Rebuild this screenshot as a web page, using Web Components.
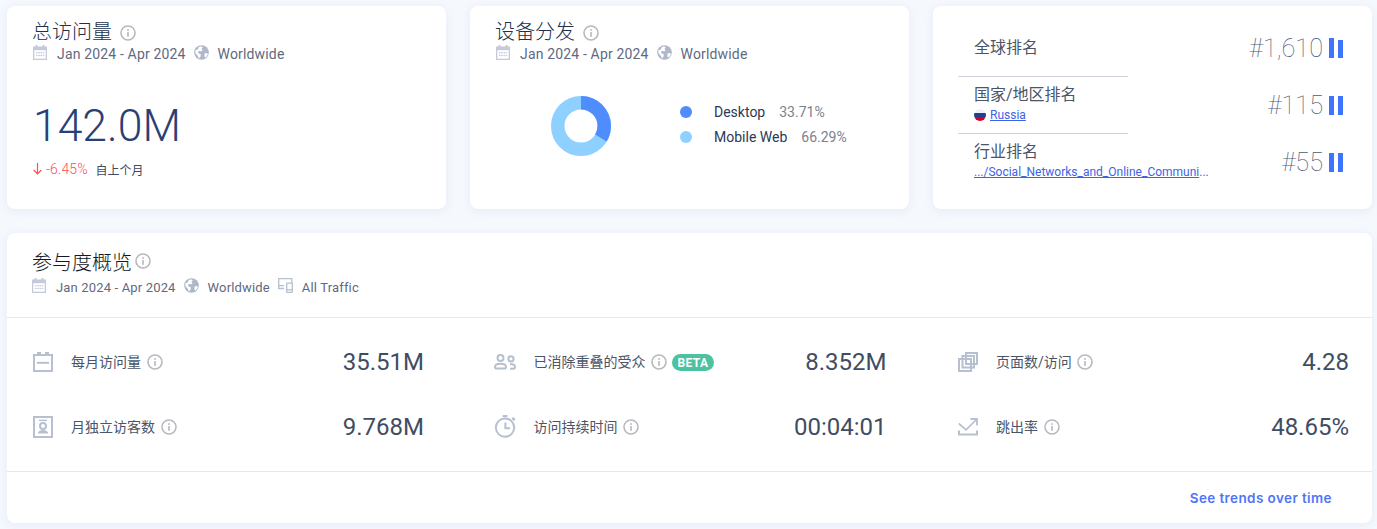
<!DOCTYPE html>
<html lang="zh"><head><meta charset="utf-8"><title>Overview</title>
<style>
html,body{margin:0;padding:0;background:#f5f8fd;}
body{font-family:Roboto,"Noto Sans CJK SC",sans-serif;color:#3a4a63;width:1377px;height:529px;overflow:hidden;}
</style></head><body>
<x-page>
  <x-card>
    <x-head title-text="总访问量"><x-meta-item icon="cal">Jan 2024 - Apr 2024</x-meta-item><x-meta-item icon="globe">Worldwide</x-meta-item></x-head>
    <x-total value="142.0M" delta="-6.45%" note="自上个月"></x-total>
  </x-card>
  <x-card>
    <x-head title-text="设备分发"><x-meta-item icon="cal">Jan 2024 - Apr 2024</x-meta-item><x-meta-item icon="globe">Worldwide</x-meta-item></x-head>
    <x-devices></x-devices>
  </x-card>
  <x-card>
    <x-ranks>
      <x-rank value="#1,610" first>全球排名</x-rank>
      <x-rule></x-rule>
      <x-rank value="#115">国家/地区排名<x-flag-link slot="sub">Russia</x-flag-link></x-rank>
      <x-rule></x-rule>
      <x-rank value="#55">行业排名<x-cat-link slot="sub">.../Social_Networks_and_Online_Communi</x-cat-link></x-rank>
    </x-ranks>
  </x-card>
  <x-card wide>
    <x-head wide title-text="参与度概览"><x-meta-item small icon="cal">Jan 2024 - Apr 2024</x-meta-item><x-meta-item small icon="globe">Worldwide</x-meta-item><x-meta-item small icon="traffic">All Traffic</x-meta-item></x-head>
    <x-metrics>
      <x-metric icon="month" value="35.51M">每月访问量</x-metric>
      <x-metric icon="people" value="8.352M">已消除重叠的受众<x-beta slot="badge">BETA</x-beta></x-metric>
      <x-metric icon="pages" value="4.28">页面数/访问</x-metric>
      <x-metric icon="person" value="9.768M">月独立访客数</x-metric>
      <x-metric icon="watch" value="00:04:01">访问持续时间</x-metric>
      <x-metric icon="bounce" value="48.65%">跳出率</x-metric>
    </x-metrics>
    <x-foot>See trends over time</x-foot>
  </x-card>
</x-page>
<script>
const S='#b6c0d0';
const ICONS={
 info:`<svg width="16" height="16" viewBox="0 0 16 16"><circle cx="8" cy="8" r="7" fill="none" stroke="#b7b9bf" stroke-width="1.600"/><rect x="7.200" y="7" width="1.600" height="4.800" fill="#b7b9bf"/><rect x="7.200" y="4.200" width="1.600" height="1.700" fill="#b7b9bf"/></svg>`,
 cal:`<svg width="14" height="15" viewBox="0 0 14 15"><path d="M2.500 0h2v1.500h5V0h2v1.500H14V15H0V1.500h2.500z" fill="#c4cad9"/><rect x="1.300" y="5.200" width="11.400" height="8.500" fill="#fff"/><g fill="#c4cad9"><rect x="3" y="7" width="1.500" height="1.300"/><rect x="5.300" y="7" width="1.500" height="1.300"/><rect x="7.500" y="7" width="1.500" height="1.300"/><rect x="9.700" y="7" width="1.500" height="1.300"/><rect x="3" y="9.800" width="1.500" height="1.300"/><rect x="5.300" y="9.800" width="1.500" height="1.300"/><rect x="7.500" y="9.800" width="1.500" height="1.300"/><rect x="9.700" y="9.800" width="1.500" height="1.300"/></g></svg>`,
 globe:`<svg width="15" height="15" viewBox="0 0 15 15"><circle cx="7.500" cy="7.500" r="7.300" fill="#aeb8c8"/><path d="M1.200 5.500 4 4.200l.6-2L7 1.200 8.800 2.400 7.400 4 8.600 5.600 6.800 6.600 5.600 5.800 4 6.400 4.600 8.400 6.800 9.200 6.600 11.600 5 13.400 3.600 10.600 1.600 8.600z" fill="#fff"/><path d="M10.500 8.400l2.600-.4.6 1.600-1.800 2.800-1.400-.6z" fill="#fff"/></svg>`,
 traffic:`<svg width="15" height="15" viewBox="0 0 15 15" fill="none" stroke="#b6c0d0" stroke-width="1.300"><path d="M6 10.500H.7V.7h13.100v4"/><path d="M.7 7.600H6"/><rect x="8.700" y="5.200" width="5.600" height="9.100" rx=".6"/><path d="M8.700 11.800h5.600"/></svg>`,
 month:`<svg width="20" height="20" viewBox="0 0 20 20" fill="none" stroke="${S}" stroke-width="2"><path d="M1 3h18v16H1z"/><path d="M6 0v3M14 0v3" stroke-width="4"/><path d="M4 10.800h12"/></svg>`,
 person:`<svg width="20" height="22" viewBox="0 0 20 22" fill="none" stroke="${S}" stroke-width="2"><path d="M1 1h18v20H1z"/><path d="M6 4.400h8" stroke-width="1.400"/><circle cx="10" cy="10" r="3"/><path d="M4.800 17.400c.6-2.600 2.600-3.400 5.200-3.400s4.600.8 5.200 3.400z" fill="${S}" stroke="none"/></svg>`,
 people:`<svg style="margin-left:-1.500px" width="22" height="16" viewBox="0 0 22 16" fill="none" stroke="${S}" stroke-width="2"><circle cx="6.500" cy="4" r="3"/><circle cx="17" cy="4.800" r="2.600"/><path d="M1 13.200c0-2.400 2.500-3.400 5.500-3.400s5.500 1 5.500 3.400c0 1-1 1.400-2 1.400H3c-1 0-2-.4-2-1.400z"/><path d="M16 10c3 0 5 .8 5 3 0 1-.6 1.800-2 1.800h-3"/></svg>`,
 watch:`<svg style="margin-left:-1.300px" width="22" height="23" viewBox="0 0 22 23" fill="none" stroke="${S}" stroke-width="2"><circle cx="11" cy="12.600" r="9.200"/><path d="M8.600 1h4.800" stroke-width="2.400"/><path d="M18.400 2.800l2.200 2.200" stroke-width="2.600"/><path d="M11.400 7.400v5.800h4.600"/></svg>`,
 pages:`<svg width="20" height="20" viewBox="0 0 20 20" fill="none" stroke="${S}" stroke-width="2"><rect x="1" y="7" width="12" height="12"/><rect x="4.500" y="4" width="11.500" height="11.500"/><rect x="8" y="1" width="11" height="11"/></svg>`,
 bounce:`<svg width="20" height="18" viewBox="0 0 20 18" fill="none" stroke="${S}" stroke-width="2"><path d="M1 12.500v4h18v-4" stroke-linecap="butt"/><path d="M.8 5.500 8 11.800 18.500 1.500" stroke-width="1.700"/><path d="M12.500 1h6.500v6.500" stroke-width="1.800"/></svg>`
};
function def(name,css,html,extra){
  customElements.define(name,class extends HTMLElement{
    constructor(){super();const r=this.attachShadow({mode:'open'});
      r.innerHTML=`<style>${css}</style>${html}`;}
    connectedCallback(){if(extra)extra(this,this.shadowRoot);}
  });
}
def('x-page',`:host{display:grid;grid-template-columns:439px 439px 439px;column-gap:24px;row-gap:24px;padding:6px 5px 0 7px;}
 ::slotted(x-card[wide]){grid-column:1 / -1;}`,`<slot></slot>`);
def('x-card',`:host{display:block;background:#fff;border-radius:8px;box-shadow:0 2px 8px rgba(190,205,230,.28);height:203px;box-sizing:border-box;}
 :host([wide]){height:290px;}`,`<slot></slot>`);
def('x-info',`:host{display:inline-flex;width:16px;height:16px;}`,ICONS.info);
def('x-head',`:host{display:block;padding:14px 0 0 25px;}
 :host([wide]){padding:18px 0 0 24px;height:85px;box-sizing:border-box;border-bottom:1px solid #e6e8ec;}
 .t{display:flex;align-items:center;height:24px;font-size:20px;line-height:24px;color:#22304a;font-weight:300;}
 :host([wide]) .t{color:#111827;}
 :host([wide]) #tt{margin-left:1px;}
 x-info{margin-left:8px;margin-top:2px;}
 :host([wide]) x-info{margin-left:3px;margin-top:-4px;}
 .m{display:flex;align-items:center;height:20px;}
 :host([wide]) .m{margin-top:2px;}`,
 `<div class="t"><span id="tt"></span><x-info></x-info></div><div class="m"><slot></slot></div>`,
 (h,r)=>{r.getElementById('tt').textContent=h.getAttribute('title-text');});
def('x-meta-item',`:host{display:inline-flex;align-items:center;font-size:14px;letter-spacing:.16px;color:#5f6a7f;margin-right:7px;height:20px;}
 :host([small]){font-size:13px;margin-right:7px;}
 i{display:inline-flex;width:15px;margin:-3px 9px 0 1px;}`,`<i id="i"></i><slot></slot>`,
 (h,r)=>{r.getElementById('i').innerHTML=ICONS[h.getAttribute('icon')];});
def('x-total',`:host{display:block;padding-left:26px;}
 .v{margin-top:34px;height:56px;line-height:56px;font-size:44.500px;font-weight:300;color:#2a3f76;}
 .d{display:flex;align-items:center;margin-top:5px;height:20px;}
 .p{font-size:14px;font-weight:300;color:#ff4d53;margin-left:4px;letter-spacing:.1px;}
 .n{font-size:12px;color:#3a4a63;margin-left:8px;}
 svg{display:block;}`,
 `<div class="v" id="v"></div><div class="d"><svg width="9" height="12" viewBox="0 0 9 12" fill="none" stroke="#ff4d53" stroke-width="1.200"><path d="M4.500 0v11M.7 7l3.800 4 3.800-4"/></svg><span class="p" id="p"></span><span class="n" id="n"></span></div>`,
 (h,r)=>{['value:v','delta:p','note:n'].forEach(s=>{const[a,b]=s.split(':');r.getElementById(b).textContent=h.getAttribute(a);});});
def('x-devices',`:host{display:flex;align-items:center;padding:32px 0 0 81px;}
 .l{margin:-3px 0 0 69px;font-size:14px;}
 .r{display:flex;align-items:center;height:25px;}
 .dot{width:12px;height:12px;border-radius:50%;margin-right:22px;}
 .n{color:#2b3a55;margin-right:14px;}
 .p{color:#7d818c;}
 svg{display:block;}`,
 `<svg width="60" height="60" viewBox="0 0 60 60" fill="none" stroke-width="13.500"><circle cx="30" cy="30" r="23.250" stroke="#8ed0ff"/><circle cx="30" cy="30" r="23.250" stroke="#4f8dfd" pathLength="100" stroke-dasharray="33.710 66.290" transform="rotate(-90 30 30)"/></svg>
 <div class="l"><div class="r"><span class="dot" style="background:#4f8dfd"></span><span class="n">Desktop</span><span class="p">33.71%</span></div><div class="r"><span class="dot" style="background:#8ed0ff"></span><span class="n">Mobile Web</span><span class="p">66.29%</span></div></div>`);
def('x-ranks',`:host{display:block;padding:13px 29px 0 25px;}`,`<slot></slot>`);
def('x-rule',`:host{display:block;width:170px;height:1px;background:#d0d3dc;}`,``);
def('x-rank',`:host{display:flex;align-items:center;justify-content:space-between;height:56px;}
 :host([first]){height:57px;}
 .a{padding-left:16px;margin-top:-2px;}
 :host([first]) .a{margin-top:1px;}
 .lb{font-size:16px;line-height:20px;color:#4a5568;}
 ::slotted([slot=sub]){margin-top:1px;}
 .b{display:flex;align-items:center;}
 .v{font-size:25.300px;font-weight:100;color:#4a5a75;margin-right:6px;line-height:30px;margin-top:2px;}
 .bars{display:flex;gap:4px;align-items:flex-end;height:20px;}
 .bars i{display:block;width:5px;height:19px;background:#3e74fe;}
 :host([first]) .bars i:first-child{height:20px;}
 :host([first]) .bars i:last-child{height:18px;}`,
 `<div class="a"><div class="lb"><slot></slot></div><slot name="sub"></slot></div><div class="b"><span class="v" id="v"></span><span class="bars"><i></i><i></i></span></div>`,
 (h,r)=>{r.getElementById('v').textContent=h.getAttribute('value');});
def('x-flag-link',`:host{display:flex;align-items:center;height:18px;font-size:12px;}
 svg{margin-right:4px;display:block;}
 a{color:#3d63e6;text-decoration:underline;}`,
 `<svg width="12" height="12" viewBox="0 0 12 12"><defs><clipPath id="c"><circle cx="6" cy="6" r="6"/></clipPath></defs><g clip-path="url(#c)"><rect width="12" height="4" fill="#eef0f4"/><rect y="4" width="12" height="4" fill="#1f3f99"/><rect y="8" width="12" height="4" fill="#d80027"/></g></svg><a href="#"><slot></slot></a>`);
def('x-cat-link',`:host{display:block;height:18px;line-height:18px;font-size:12px;white-space:nowrap;color:#3d63e6;}
 a{color:inherit;text-decoration:underline;}`,`<a href="#"><slot></slot></a><span>...</span>`);
def('x-metrics',`:host{display:grid;grid-template-columns:repeat(3,392px);column-gap:70.500px;grid-auto-rows:65px;padding:11px 0 12px 25px;height:154px;box-sizing:border-box;border-bottom:1px solid #e6e8ec;}`,`<slot></slot>`);
def('x-metric',`:host{display:flex;align-items:center;min-width:0;}
 .ic{width:39px;display:flex;align-items:center;flex:none;padding-left:1px;box-sizing:border-box;}
 .ic svg{display:block;}
 .lb{font-size:14px;color:#4a5568;white-space:nowrap;font-weight:400;margin-top:-2px;}
 x-info{margin-left:5.500px;}
 ::slotted([slot=badge]){margin-left:5px;margin-top:2px;}
 .v{margin-left:auto;font-size:24px;color:#3f4d63;font-weight:400;}`,
 `<span class="ic" id="i"></span><span class="lb"><slot></slot></span><x-info></x-info><slot name="badge"></slot><span class="v" id="v"></span>`,
 (h,r)=>{r.getElementById('i').innerHTML=ICONS[h.getAttribute('icon')];r.getElementById('v').textContent=h.getAttribute('value');});
def('x-beta',`:host{display:inline-flex;align-items:center;justify-content:center;width:42px;height:17px;border-radius:9px;background:#4cc2a0;color:#fff;font-size:12px;font-weight:700;letter-spacing:.4px;}`,`<slot></slot>`);
def('x-foot',`:host{display:flex;justify-content:flex-end;align-items:center;height:51px;padding-right:40px;font-family:Inter,Roboto,sans-serif;font-size:13.500px;font-weight:600;color:#4f75f8;letter-spacing:.4px;}`,`<slot></slot>`);
</script>
</body></html>
